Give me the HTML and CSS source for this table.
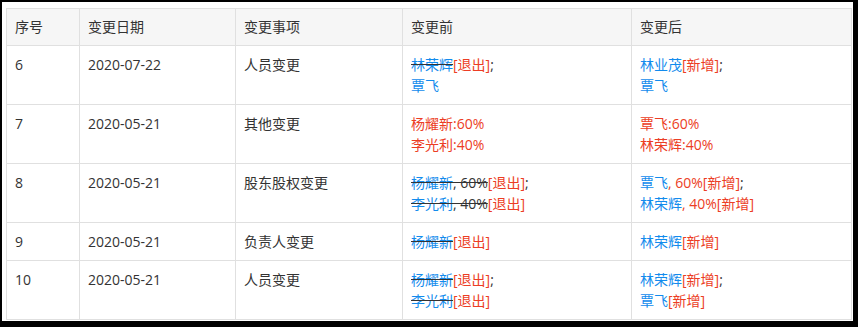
FILE: index.html
```html
<!DOCTYPE html>
<html lang="zh-CN">
<head>
<meta charset="utf-8">
<title>变更记录</title>
<link rel="stylesheet" href="styles.css">
</head>
<body>
<div class="frame">
  <table class="changes">
    <colgroup>
      <col class="c-no"><col class="c-date"><col class="c-item"><col class="c-before"><col class="c-after">
    </colgroup>
    <thead>
      <tr><th>序号</th><th>变更日期</th><th>变更事项</th><th>变更前</th><th>变更后</th></tr>
    </thead>
    <tbody>
      <tr>
        <td>6</td><td>2020-07-22</td><td>人员变更</td>
        <td><span class="del"><span class="name">林荣辉</span></span><span class="red">[退出]</span>;<br><span class="name">覃飞</span></td>
        <td><span class="name">林业茂</span><span class="red">[新增]</span>;<br><span class="name">覃飞</span></td>
      </tr>
      <tr>
        <td>7</td><td>2020-05-21</td><td>其他变更</td>
        <td><span class="red">杨耀新:60%</span><br><span class="red">李光利:40%</span></td>
        <td><span class="red">覃飞:60%</span><br><span class="red">林荣辉:40%</span></td>
      </tr>
      <tr>
        <td>8</td><td>2020-05-21</td><td>股东股权变更</td>
        <td><span class="del"><span class="name">杨耀新</span>, 60%</span><span class="red">[退出]</span>;<br><span class="del"><span class="name">李光利</span>, 40%</span><span class="red">[退出]</span></td>
        <td><span class="name">覃飞</span><span class="red">, 60%[新增]</span>;<br><span class="name">林荣辉</span><span class="red">, 40%[新增]</span></td>
      </tr>
      <tr>
        <td>9</td><td>2020-05-21</td><td>负责人变更</td>
        <td><span class="del"><span class="name">杨耀新</span></span><span class="red">[退出]</span></td>
        <td><span class="name">林荣辉</span><span class="red">[新增]</span></td>
      </tr>
      <tr>
        <td>10</td><td>2020-05-21</td><td>人员变更</td>
        <td><span class="del"><span class="name">杨耀新</span></span><span class="red">[退出]</span>;<br><span class="del"><span class="name">李光利</span></span><span class="red">[退出]</span></td>
        <td><span class="name">林荣辉</span><span class="red">[新增]</span>;<br><span class="name">覃飞</span><span class="red">[新增]</span></td>
      </tr>
    </tbody>
  </table>
</div>
</body>
</html>
```
FILE: styles.css
```css
html, body {
  margin: 0;
  padding: 0;
  background: #000;
}
.frame {
  box-sizing: border-box;
  width: 858px;
  height: 327px;
  border-style: solid;
  border-color: #000;
  border-width: 2px 5px 6px 2px;
  background: #fff;
  padding: 6px 2px 0 4px;
}
.changes {
  border-collapse: collapse;
  table-layout: fixed;
  width: 845px;
  font-family: "Open Sans", "Noto Sans CJK SC", sans-serif;
  font-size: 14px;
  color: #333;
}
.c-no { width: 73px; }
.c-date { width: 156px; }
.c-item { width: 167px; }
.c-before { width: 229px; }
.c-after { width: 220px; }
.changes th,
.changes td {
  border: 1px solid #e0e0e0;
  padding: 8px 8px;
  text-align: left;
  vertical-align: top;
  line-height: 21px;
  font-weight: normal;
}
.changes th {
  background: #f6f6f6;
  line-height: 20px;
}
.name { color: #128bed; }
.red { color: #ec3d24; }
.del {
  text-decoration: line-through;
  text-decoration-color: #333;
  color: #333;
}
```
